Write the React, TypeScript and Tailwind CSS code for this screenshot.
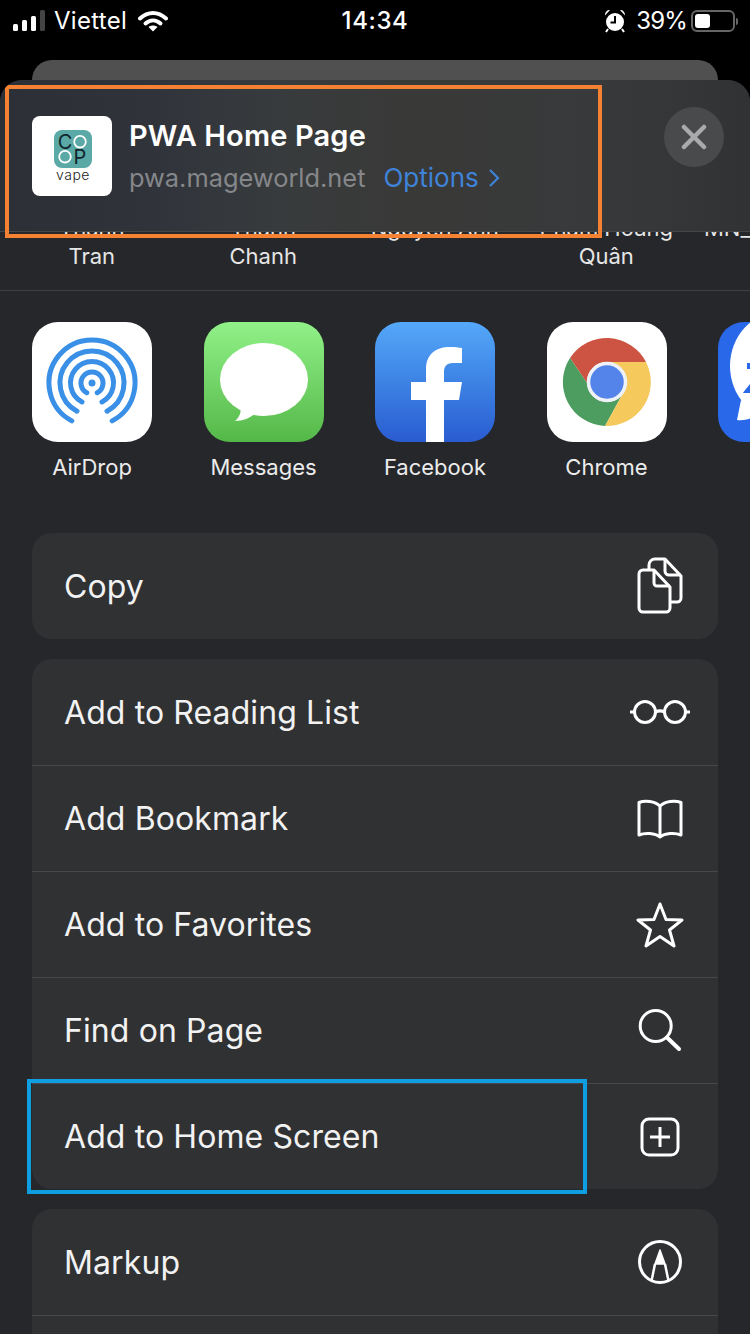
const contacts = [
  ['Thanh', 'Tran'],
  ['Thanh', 'Chanh'],
  ['Nguyen Anh', ''],
  ['Pham Hoang', 'Quân'],
  ['MN_Coop Vap', ''],
]

const SignalIcon = () => (
  <svg width="34" height="22" viewBox="0 0 34 22" className="ml-[12px] shrink-0">
    <rect x="1" y="14" width="5" height="7" rx="1.5" fill="#fff" />
    <rect x="10" y="10" width="5" height="11" rx="1.5" fill="#fff" />
    <rect x="19" y="6" width="5" height="15" rx="1.5" fill="#fff" />
    <rect x="28" y="0" width="5" height="21" rx="1.5" fill="#444" />
  </svg>
)

const WifiIcon = () => (
  <svg width="30" height="22" viewBox="0 0 30 22" className="shrink-0">
    <path d="M2 8.500C10 1 20 1 28 8.500" fill="none" stroke="#fff" strokeWidth="4" strokeLinecap="round" />
    <path d="M7.500 13.500C12 9.500 18 9.500 22.500 13.500" fill="none" stroke="#fff" strokeWidth="4" strokeLinecap="round" />
    <path d="M15 21.500L10.500 17C13 15 17 15 19.500 17Z" fill="#fff" />
  </svg>
)

const AlarmIcon = () => (
  <svg width="22" height="24" viewBox="0 0 22 24" className="shrink-0">
    <circle cx="11" cy="13" r="9" fill="#fff" />
    <path d="M11 7v6.500H6.500" fill="none" stroke="#000" strokeWidth="2" />
    <path d="M1 6.500C1 3 3 1 6 1ZM21 6.500C21 3 19 1 16 1Z" fill="#fff" />
    <path d="M4 20l-2 3M18 20l2 3" stroke="#fff" strokeWidth="2" />
  </svg>
)

const BatteryIcon = () => (
  <div className="flex items-center gap-[1px] ml-[4px]">
    <div className="w-[44px] h-[22px] rounded-[6px] border-2 border-[#666] p-[2px]">
      <div className="w-[15px] h-full rounded-[3px] bg-white" />
    </div>
    <div className="w-[2px] h-[7px] rounded-r-sm bg-[#666]" />
  </div>
)

const StatusBar = () => (
  <div className="h-[60px] pb-[18px] grid grid-cols-3 items-center text-white text-[24px]">
    <div className="flex items-center">
      <SignalIcon />
      <span className="ml-[8px] mr-[11px] tracking-[0.3px]">Viettel</span>
      <WifiIcon />
    </div>
    <div className="text-center font-medium tracking-[0.6px]">14:34</div>
    <div className="flex items-center justify-end pr-[12px]">
      <AlarmIcon />
      <span className="ml-[10px] tracking-[-0.8px]">39%</span>
      <BatteryIcon />
    </div>
  </div>
)

const CoopLogo = () => (
  <svg width="80" height="80" viewBox="0 0 80 80" className="rounded-[8px] bg-white shrink-0 mt-[9px]">
    <rect x="22" y="14" width="38" height="38" rx="8" fill="#5aa9a6" />
    <circle cx="48" cy="25.700" r="5.800" fill="none" stroke="#fff" strokeWidth="1.800" />
    <circle cx="33" cy="40.700" r="5.800" fill="none" stroke="#fff" strokeWidth="1.800" />
    <text x="33" y="33" textAnchor="middle" fontSize="20" fill="#10262b" fontFamily="Inter, sans-serif">C</text>
    <text x="48" y="48" textAnchor="middle" fontSize="20" fill="#10262b" fontFamily="Inter, sans-serif">P</text>
    <text x="41" y="64" textAnchor="middle" fontSize="14" fontWeight="300" letterSpacing="0.5" fill="#222" fontFamily="Inter, sans-serif">vape</text>
  </svg>
)

const AirDropIcon = () => (
  <div className="w-[120px] h-[120px] rounded-[26px] bg-white shrink-0">
    <svg width="120" height="120" viewBox="0 0 120 120" fill="none" stroke="#3a8fe6" strokeWidth="5" strokeLinecap="round">
      <path d="M39.800 98.900A43 43 0 1 1 80.200 98.900" />
      <path d="M45 89.200A32 32 0 1 1 75 89.200" />
      <path d="M50 80A21.500 21.500 0 1 1 70 80" />
      <path d="M54.800 70.700A11 11 0 1 1 65.200 70.700" />
      <circle cx="60" cy="61" r="3.500" fill="#3a8fe6" stroke="none" />
    </svg>
  </div>
)

const MessagesIcon = () => (
  <div className="w-[120px] h-[120px] rounded-[26px] bg-linear-to-b from-[#91f188] to-[#54b848] shrink-0">
    <svg width="120" height="120" viewBox="0 0 120 120">
      <ellipse cx="60" cy="57.500" rx="44" ry="36.500" fill="#fff" />
      <path d="M37 84C37 90 36 95 31 99C39 99 46 96 52 91Z" fill="#fff" />
    </svg>
  </div>
)

const FacebookIcon = () => (
  <div className="w-[120px] h-[120px] rounded-[26px] bg-linear-to-b from-[#55a8f9] to-[#2a5cd0] shrink-0">
    <svg width="120" height="120" viewBox="0 0 120 120">
      <path d="M51 120V78H36V60H51V47C51 33 60 25 75 25C80 25 84 25.500 87 26V41H78C71 41 69 45 69 50V60H87L84 78H69V120Z" fill="#fff" />
    </svg>
  </div>
)

const ChromeIcon = () => (
  <div className="w-[120px] h-[120px] rounded-[26px] bg-white shrink-0">
    <svg width="120" height="120" viewBox="0 0 120 120">
      <path d="M23 36A44 44 0 0 1 99 40H60A20 20 0 0 0 40 61Z" fill="#cd5442" />
      <path d="M23 36L40 61A20 20 0 0 0 75 73L58 104A44 44 0 0 1 23 36Z" fill="#4c9d5f" />
      <path d="M99 40A44 44 0 0 1 58 104L75 73A20 20 0 0 0 60 40Z" fill="#f5c95c" />
      <circle cx="60" cy="60" r="18.500" fill="#5484ea" stroke="#eef1f6" strokeWidth="3.500" />
    </svg>
  </div>
)

const ZaloIcon = () => (
  <div className="w-[120px] h-[120px] rounded-[26px] bg-[#2a68ea] shrink-0 overflow-hidden">
    <svg width="120" height="120" viewBox="0 0 120 120">
      <ellipse cx="62" cy="44" rx="50" ry="54" fill="#fff" />
      <path d="M23 78L19 98C28 99 36 96 42 90Z" fill="#fff" />
      <path d="M29 44H50L31 68H50" fill="none" stroke="#2a68ea" strokeWidth="6" />
    </svg>
  </div>
)

const apps = [
  { name: 'AirDrop', icon: <AirDropIcon /> },
  { name: 'Messages', icon: <MessagesIcon /> },
  { name: 'Facebook', icon: <FacebookIcon /> },
  { name: 'Chrome', icon: <ChromeIcon /> },
  { name: '', icon: <ZaloIcon /> },
]

const CopyIcon = () => (
  <svg width="46" height="58" viewBox="0 0 46 58" fill="none" stroke="#fff" strokeWidth="3" strokeLinejoin="round">
    <path d="M12 12V8a6 6 0 0 1 6-6h10l16 17v22a4 4 0 0 1-4 4h-7" />
    <path d="M28 2v12a4 4 0 0 0 4 4h12" />
    <path d="M6 13h11l16 17v21a4 4 0 0 1-4 4H6a4 4 0 0 1-4-4V17a4 4 0 0 1 4-4z" />
    <path d="M17 13v13a3 3 0 0 0 3 3h13" />
  </svg>
)

const GlassesIcon = () => (
  <svg width="60" height="24" viewBox="0 0 60 24" fill="none" stroke="#fff" strokeWidth="3">
    <circle cx="15" cy="12" r="10.500" />
    <circle cx="45" cy="12" r="10.500" />
    <path d="M0 12h4.500M25.500 12c3-1.500 6-1.500 9 0M55.500 12H60" />
  </svg>
)

const BookIcon = () => (
  <svg width="46" height="40" viewBox="0 0 46 40" fill="none" stroke="#fff" strokeWidth="3" strokeLinejoin="round">
    <path d="M23 7C18 2 8 1 2 3.500V36C8 33.500 18 34 23 38C28 34 38 33.500 44 36V3.500C38 1 28 2 23 7Z" />
    <path d="M23 7V38" />
  </svg>
)

const StarIcon = () => (
  <svg width="48" height="46" viewBox="0 0 48 46" fill="none" stroke="#fff" strokeWidth="3" strokeLinejoin="round">
    <path d="M24 2L30 17.500L46 18L33.500 28L38 44L24 34.500L10 44L14.500 28L2 18L18 17.500Z" />
  </svg>
)

const SearchIcon = () => (
  <svg width="46" height="46" viewBox="0 0 46 46" fill="none" stroke="#fff" strokeWidth="3" strokeLinecap="round">
    <circle cx="18.700" cy="18" r="15.500" />
    <path d="M30 29.500L42 41" strokeWidth="4" />
  </svg>
)

const PlusSquareIcon = () => (
  <svg width="40" height="40" viewBox="0 0 40 40" fill="none" stroke="#fff" strokeWidth="3">
    <rect x="2" y="2" width="36" height="36" rx="7" />
    <path d="M20 10V30M10 20H30" />
  </svg>
)

const MarkupIcon = () => (
  <svg width="46" height="46" viewBox="0 0 46 46" fill="none" stroke="#fff" strokeWidth="3">
    <circle cx="23" cy="23" r="20.500" />
    <path d="M23 11L28 25H18Z" fill="#fff" stroke="#fff" strokeWidth="1.500" strokeLinejoin="round" />
    <path d="M18 25L14.500 42M28 25L31.500 42" strokeWidth="2.500" />
  </svg>
)

const ActionRow = ({ label, icon, divider, children }: { label: string; icon: React.ReactNode; divider?: boolean; children?: React.ReactNode }) => (
  <div className={`relative flex items-center justify-between h-[106px] pl-[32px] pr-[28px] ${divider ? 'border-t border-[#47484a]' : ''}`}>
    <span className="mt-[1px] text-[32px] text-[#f2f2f2] tracking-[0.1px]">{label}</span>
    <div className="w-[60px] flex justify-center">{icon}</div>
    {children}
  </div>
)

const App = () => {
  return (
    <div
      className="w-[750px] h-[1334px] overflow-hidden bg-black"
      style={{ fontFamily: 'Inter, "Liberation Sans", sans-serif' }}
    >
      <StatusBar />
      <div className="h-[20px] mx-[32px] rounded-t-[22px] bg-[#505050]" />

      <div className="relative h-[1254px] rounded-t-[22px] bg-[#26272a] overflow-hidden">
        <div className="h-[152px] flex items-start justify-between pt-[27px] pl-[32px] pr-[26px] border-b border-[#454648] bg-[linear-gradient(90deg,#2c2f36_0%,#30333a_20%,#383b3d_37%,#393937_56%,#383a3b_75%,#353739_87%,#303234_100%)]">
          <div className="flex items-start">
            <CoopLogo />
            <div className="ml-[17px] mt-[12px]">
              <div className="text-[29px] leading-[34px] font-semibold tracking-[0.15px] text-white">PWA Home Page</div>
              <div className="mt-[8px] flex items-center leading-[34px]">
                <span className="text-[25.400px] text-[#85878a]">pwa.mageworld.net</span>
                <span className="ml-[18px] text-[26px] text-[#3f83d9]">Options</span>
                <svg width="12" height="20" viewBox="0 0 12 20" fill="none" stroke="#3f83d9" strokeWidth="2.200" className="ml-[9px]">
                  <path d="M2 2L10 10L2 18" />
                </svg>
              </div>
            </div>
          </div>
          <div className="w-[60px] h-[60px] rounded-full bg-[#484a4c] flex items-center justify-center">
            <svg width="26" height="26" viewBox="0 0 26 26" stroke="#a8aaac" strokeWidth="4.500" strokeLinecap="round">
              <path d="M3 3L23 23M23 3L3 23" />
            </svg>
          </div>
        </div>

        <div className="h-[59px] pl-[6px] flex items-end overflow-hidden border-b border-[#3e3f41] pb-[20px]">
          {contacts.map((c) => (
            <div key={c[0]} className="w-[171.500px] shrink-0 text-center text-[22px] leading-[28px] text-[#e6e6e6] whitespace-nowrap">
              <div>{c[0]}</div>
              <div className="h-[28px]">{c[1]}</div>
            </div>
          ))}
        </div>

        <div className="flex pl-[32px] pt-[31px] gap-[51.500px]">
          {apps.map((a, i) => (
            <div key={i} className="w-[120px] shrink-0 flex flex-col items-center">
              {a.icon}
              <div className="mt-[11px] h-[28px] text-[22px] leading-[28px] text-[#ececec] whitespace-nowrap">{a.name}</div>
            </div>
          ))}
        </div>

        <div className="mt-[52px] mx-[32px] rounded-[20px] bg-[#303133]">
          <ActionRow label="Copy" icon={<CopyIcon />} />
        </div>

        <div className="mt-[20px] mx-[32px] rounded-[20px] bg-[#303133]">
          <ActionRow label="Add to Reading List" icon={<GlassesIcon />} />
          <ActionRow label="Add Bookmark" icon={<BookIcon />} divider />
          <ActionRow label="Add to Favorites" icon={<StarIcon />} divider />
          <ActionRow label="Find on Page" icon={<SearchIcon />} divider />
          <ActionRow label="Add to Home Screen" icon={<PlusSquareIcon />} divider>
            <div className="absolute left-[-5px] top-[-5px] w-[560px] h-[115px] border-4 border-[#0d9fe2]" />
          </ActionRow>
        </div>

        <div className="mt-[20px] mx-[32px] rounded-t-[20px] bg-[#303133]">
          <ActionRow label="Markup" icon={<MarkupIcon />} />
          <ActionRow label="" icon={null} divider />
        </div>

        <div className="absolute left-[5px] top-[5px] w-[597px] h-[153px] border-4 border-[#f58232]" />
      </div>
    </div>
  )
}

export default App
